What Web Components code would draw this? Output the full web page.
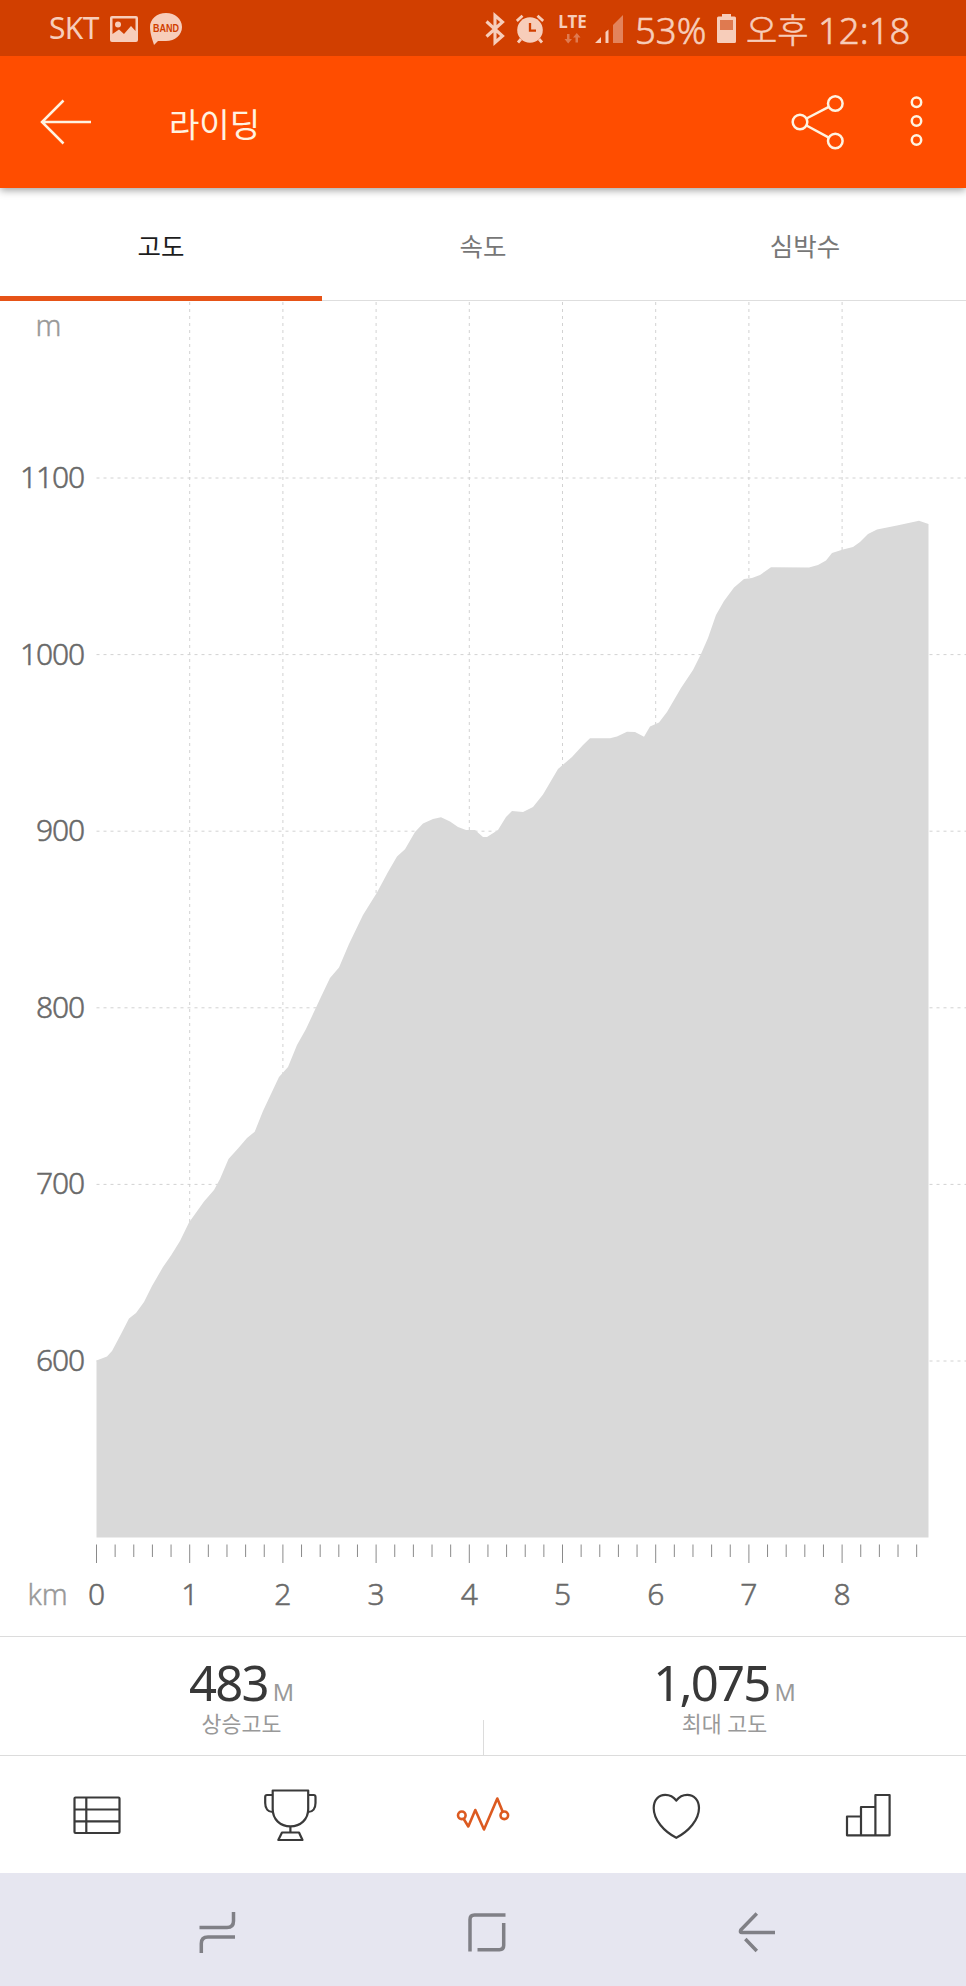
<!DOCTYPE html>
<html lang="ko">
<head>
<meta charset="utf-8">
<meta name="viewport" content="width=device-width">
<title>라이딩</title>
<style>
    body {
        margin: 0;
        background: #fff;
        font-family: "Noto Sans", "Noto Sans CJK KR", sans-serif;
    }
</style>
</head>
<body>
<ride-screen>
    <status-bar slot="top"></status-bar>
    <app-bar slot="top">라이딩</app-bar>
    <tab-strip slot="top">
        <tab-item selected>고도</tab-item>
        <tab-item>속도</tab-item>
        <tab-item>심박수</tab-item>
    </tab-strip>
    <elevation-chart></elevation-chart>
    <stat-row slot="bottom">
        <stat-cell value="483" unit="M">상승고도</stat-cell>
        <stat-cell value="1,075" unit="M">최대 고도</stat-cell>
    </stat-row>
    <icon-nav slot="bottom"></icon-nav>
    <system-nav slot="bottom"></system-nav>
</ride-screen>

<script>
class WcBase extends HTMLElement {
    constructor() {
        super();
        this.attachShadow({ mode: "open" });
    }

    connectedCallback() {
        this.shadowRoot.innerHTML = this.render();
    }
}

class RideScreen extends WcBase {
    render() {
        return `
            <style>
                :host {
                    display: flex;
                    flex-flow: column nowrap;
                    width: 966px;
                    height: 1986px;
                    overflow: hidden;
                }
                main {
                    flex: 1;
                    min-height: 0;
                }
            </style>
            <slot name="top"></slot>
            <main><slot></slot></main>
            <slot name="bottom"></slot>
        `;
    }
}

class StatusBar extends WcBase {
    render() {
        return `
            <style>
                :host {
                    display: flex;
                    justify-content: space-between;
                    flex: none;
                    height: 56px;
                    box-sizing: border-box;
                    padding: 0 48px 0 49px;
                    background: #d13f00;
                    color: #f7cdba;
                    fill: #f7cdba;
                    line-height: 56px;
                    white-space: nowrap;
                }
                div {
                    display: flex;
                }
                svg {
                    display: block;
                    flex: none;
                    height: 56px;
                }
                span {
                    flex: none;
                }
                .carrier {
                    width: 61px;
                    font-size: 30px;
                    letter-spacing: -0.6px;
                }
                .big {
                    font-size: 36.5px;
                    font-weight: 300;
                    -webkit-text-stroke: 0.6px;
                    margin-top: 2px;
                }
                .right {
                    width: 433px;
                }
                .network {
                    width: 31px;
                    margin: 0 7px 0 13px;
                    display: flex;
                    flex-flow: column;
                    align-items: center;
                    font-size: 17px;
                    font-weight: 700;
                    line-height: 20px;
                    padding-top: 12px;
                }
                .network svg {
                    height: 12px;
                    margin-top: 1px;
                }
            </style>
            <div>
                <span class="carrier">SKT</span>
                <svg width="28" viewBox="0 0 28 56">
                    <path fill-rule="evenodd" d="M2 16H26Q28 16 28 18V40Q28 42 26 42H2Q0 42 0 40V18Q0 16 2 16ZM2.5 18.5V34L9 29.500L14 34L21 26L25.500 31V18.500Z"/>
                    <circle cx="8" cy="24.500" r="3"/>
                </svg>
                <svg width="32" viewBox="0 0 32 56" style="margin-left:12px">
                    <path d="M16 13C25 13 32 19 32 27S25 41 16 41H8L4 45C3 41 0 34 0 27C0 19 7 13 16 13Z"/>
                    <text x="16" y="31.500" text-anchor="middle" textLength="26" lengthAdjust="spacingAndGlyphs" font-family="Liberation Sans" font-size="10" font-weight="700" fill="#d13f00">BAND</text>
                </svg>
            </div>
            <div class="right">
                <svg width="20" viewBox="0 0 20 56">
                    <path d="M1.500 21.500L17.500 36L10 42.500V15.500L17.500 22L1.500 36.500" fill="none" stroke="#f7cdba" stroke-width="3.100"/>
                </svg>
                <svg width="28" viewBox="0 0 28 56" style="margin-left:11px">
                    <circle cx="14" cy="30" r="12.800"/>
                    <path d="M0.800 21L6.500 15.800M27.200 21L21.500 15.800M5 39L2 42.500M23 39L26 42.500" stroke="#f7cdba" stroke-width="2.800"/>
                    <path d="M14 23V30.700H20" fill="none" stroke="#d13f00" stroke-width="2.300"/>
                </svg>
                <span class="network">LTE
                    <svg width="17" viewBox="0 0 17 12" fill="#df7a50">
                        <path d="M3 1H5.500V6H8L4.200 10.500L.5 6H3ZM11.500 9.500H14V4.500H16.500L12.800 0L9 4.500H11.500Z"/>
                    </svg>
                </span>
                <svg width="28" viewBox="0 0 28 56">
                    <path d="M0 43L6 37V43ZM10.500 32L13.500 29.500V43H10.500Z"/>
                    <path d="M18 25L28 15V43H18Z" fill="#e3835b"/>
                </svg>
                <span class="big" style="width:82px;margin-left:12px">53%</span>
                <svg width="19" viewBox="0 0 19 56">
                    <path d="M5 14H14V16.500H17.500Q19 16.500 19 18V41.500Q19 43 17.500 43H1.500Q0 43 0 41.500V18Q0 16.500 1.500 16.500H5Z"/>
                    <path d="M3 20H16V30H3Z" fill="#df7a50"/>
                </svg>
                <span class="big" style="width:72px;margin-left:10px;font-size:34px">오후</span>
                <span class="big">12:18</span>
            </div>
        `;
    }
}

class AppBar extends WcBase {
    render() {
        return `
            <style>
                :host {
                    display: flex;
                    flex: none;
                    align-items: center;
                    position: relative;
                    z-index: 1;
                    height: 132px;
                    background: #ff4d00;
                    color: #fff3e0;
                    font-size: 33px;
                    box-shadow: 0 2px 8px rgba(0, 0, 0, .4);
                    /* keep the shadow off the status bar */
                    clip-path: inset(0 0 -14px);
                }
                svg {
                    display: block;
                    fill: none;
                    stroke: #fff3e0;
                    stroke-width: 2.5;
                }
                .back {
                    margin: 0 77px 0 40px;
                }
                h1 {
                    flex: 1;
                    margin: 1px 0 0;
                    font-size: inherit;
                    font-weight: 400;
                }
                .share {
                    margin-right: 63px;
                }
                .more {
                    margin-right: 42px;
                }
            </style>
            <svg class="back" width="52" height="52" viewBox="0 0 52 52">
                <path d="M51 26H2M23.500 4.500L2 26L23.500 47.500"/>
            </svg>
            <h1><slot></slot></h1>
            <svg class="share" width="54" height="60" viewBox="0 0 54 60">
                <circle cx="9" cy="30" r="7.300"/>
                <circle cx="44.300" cy="11.500" r="7.300"/>
                <circle cx="44.300" cy="49" r="7.300"/>
                <path d="M15.500 26.500L37.800 14.800M15.500 33.500L37.800 45.600"/>
            </svg>
            <svg class="more" width="16" height="60" viewBox="0 0 16 60">
                <circle cx="8.500" cy="10.300" r="4.700"/>
                <circle cx="8.500" cy="29" r="4.700"/>
                <circle cx="8.500" cy="48" r="4.700"/>
            </svg>
        `;
    }
}

class TabStrip extends WcBase {
    render() {
        return `
            <style>
                :host {
                    display: grid;
                    flex: none;
                    grid-template-columns: repeat(3, 1fr);
                    height: 113px;
                    background: linear-gradient(#dedede, #dedede) bottom / 100% 1px no-repeat;
                }
            </style>
            <slot></slot>
        `;
    }
}

class TabItem extends WcBase {
    render() {
        return `
            <style>
                :host {
                    display: flex;
                    align-items: center;
                    justify-content: center;
                    box-sizing: border-box;
                    border-bottom: 5px solid transparent;
                    padding-top: 5px;
                    color: #777;
                    font-size: 25.500px;
                }
                :host([selected]) {
                    color: #1d1d1d;
                    border-color: #e65317;
                }
            </style>
            <slot></slot>
        `;
    }
}

class ElevationChart extends WcBase {
    // kilometre 0 and the 1100 m line, in chart pixels
    #originX = 96.5;
    #originY = 177;
    #perKm = 93.2;
    #per100m = 176.6;
    #bottom = 1236.5;

    #profile = [
        [96.500, 1059.500], [107, 1055.500], [112, 1050], [120, 1035], [129, 1017.500], [136, 1012], [144, 1001], [152, 985], [163, 966],
        [171, 954.500], [180, 940], [189, 921.500], [204, 900.500], [214, 889], [220, 878], [228.500, 858], [238, 847.500], [247, 837],
        [254.700, 830.700], [263, 810], [279, 776], [288, 766], [297, 744], [306, 728], [320, 698], [330, 677], [339, 666.500],
        [349, 643], [363, 614], [377, 591.500], [388, 571], [397, 555.500], [405, 548.300], [415, 531], [423, 522.500],
        [433, 518], [441, 516.300], [450, 520.500], [458, 526], [466, 529], [475, 529], [483, 536], [487, 536], [498, 529],
        [506, 516], [512, 510], [523, 511], [533, 506], [543, 493.500], [558, 468], [572, 456], [583, 444], [590, 437.300],
        [610, 437.300], [617, 435.500], [627, 430.700], [635, 431], [644, 435.700], [650, 425.500], [659, 421.500], [667, 411],
        [681, 387], [693, 369], [701, 353], [708, 337], [716, 314], [724, 300], [734, 286.500], [744, 278], [752, 277],
        [760, 274], [771, 266.300], [809, 266.500], [818, 264], [826, 259.500], [832, 252], [843, 248.500], [853, 246],
        [860, 241], [868, 233], [877, 228.500], [897, 224.500], [919, 219.700], [928.500, 223]
    ];

    #grid() {
        let lines = "";
        for (let km = 1; km <= 8; km++) {
            const x = this.#originX + km * this.#perKm;
            lines += `<path d="M${x} 1V${this.#bottom}"/>`;
        }
        for (let i = 0; i < 6; i++) {
            const y = this.#originY + i * this.#per100m;
            lines += `<path d="M${this.#originX} ${y}H966"/>`;
        }
        return lines;
    }

    #ticks() {
        let ticks = "";
        for (let i = 0; i <= 44; i++) {
            const x = this.#originX + i * this.#perKm / 5;
            ticks += `<path d="M${x} 1243.500V${i % 5 === 0 ? 1262 : 1256}"/>`;
        }
        return ticks;
    }

    #labels() {
        let labels = "";
        for (let i = 0; i < 6; i++) {
            const y = this.#originY + i * this.#per100m + 10;
            labels += `<text class="altitude" x="84" y="${y}" text-anchor="end">${1100 - i * 100}</text>`;
        }
        for (let km = 0; km <= 8; km++) {
            labels += `<text x="${this.#originX + km * this.#perKm}" y="1304" text-anchor="middle">${km}</text>`;
        }
        return labels;
    }

    render() {
        const points = this.#profile.map(p => p.join(" ")).join("L");
        return `
            <style>
                :host {
                    display: block;
                }
                svg {
                    display: block;
                }
                .grid {
                    stroke: #d2d2d2;
                    stroke-dasharray: 3 4;
                }
                .ticks {
                    stroke: #8a8a8a;
                }
                /* light weight with a hairline stroke, between 300 and 400 */
                .labels {
                    fill: #696969;
                    stroke: #696969;
                    stroke-width: 0.5;
                    font-size: 30px;
                    font-weight: 300;
                }
                .altitude {
                    letter-spacing: -1.1px;
                }
                .unit {
                    fill: #999;
                    stroke: #999;
                    stroke-width: 0.4;
                    font-size: 29px;
                    font-weight: 300;
                }
            </style>
            <svg width="966" height="1335" viewBox="0 0 966 1335">
                <g class="grid">${this.#grid()}</g>
                <path fill="#d9d9d9" d="M96.500 ${this.#bottom}L${points}V${this.#bottom}Z"/>
                <g class="ticks">${this.#ticks()}</g>
                <g class="labels">${this.#labels()}</g>
                <text class="unit" x="35.500" y="35">m</text>
                <text class="unit" x="27.500" y="1304">km</text>
            </svg>
        `;
    }
}

class StatRow extends WcBase {
    render() {
        return `
            <style>
                :host {
                    display: grid;
                    flex: none;
                    grid-template-columns: 1fr 1fr;
                    box-sizing: border-box;
                    height: 120px;
                    border: solid #dcdcdc;
                    border-width: 1px 0;
                    background: linear-gradient(#dcdcdc, #dcdcdc) center bottom / 1px 35px no-repeat;
                }
            </style>
            <slot></slot>
        `;
    }
}

class StatCell extends WcBase {
    render() {
        return `
            <style>
                :host {
                    display: flex;
                    flex-flow: column nowrap;
                    align-items: center;
                    padding-top: 17px;
                    color: #999;
                }
                p {
                    margin: 0;
                    line-height: 56px;
                    font-size: 23.5px;
                }
                b {
                    font-size: 49px;
                    font-weight: 400;
                    letter-spacing: -1.8px;
                    color: #383838;
                    margin-right: 5px;
                }
                small {
                    margin-top: -10px;
                    font-size: 21.700px;
                    line-height: 28px;
                }
            </style>
            <p><b>${this.getAttribute("value")}</b>${this.getAttribute("unit")}</p>
            <small><slot></slot></small>
        `;
    }
}

class IconNav extends WcBase {
    render() {
        return `
            <style>
                :host {
                    display: grid;
                    flex: none;
                    grid-template-columns: repeat(5, 1fr);
                    place-items: center;
                    height: 117px;
                }
                svg {
                    width: 60px;
                    height: 60px;
                    fill: none;
                    stroke: #3a3a3a;
                    stroke-width: 2.2;
                    stroke-linejoin: round;
                }
                .active {
                    stroke: #dc5a20;
                    stroke-width: 2.6;
                }
            </style>
            <svg viewBox="0 0 60 60">
                <rect x="7.500" y="12.500" width="45" height="35.500" rx="1"/>
                <path d="M7.500 24.500H52.500M7.500 36.300H52.500M19.300 12.500V48"/>
            </svg>
            <svg viewBox="0 0 60 60">
                <path d="M12.700 5.500H48.200V24C48.200 34.500 40.500 41.300 30.400 41.300S12.700 34.500 12.700 24Z"/>
                <path d="M12.700 10H7Q5.200 10 5.200 12V18C5.200 23.500 8 27 12.700 27M48.200 10H53.700Q55.500 10 55.500 12V18C55.500 23.500 52.700 27 48.200 27M30.400 41.300V47.500M22 47.500H39L42.500 55H18.300Z"/>
            </svg>
            <svg class="active" viewBox="0 0 60 60">
                <circle cx="8.800" cy="30.300" r="3.800"/>
                <circle cx="51.300" cy="30.300" r="3.800"/>
                <path d="M10.600 33.800L15.300 41.500L22.300 25L31 44.500L44.300 13.500L49.800 27"/>
            </svg>
            <svg viewBox="0 0 60 60">
                <path d="M30.300 15.500C27.300 11.500 23.300 9.800 19.300 9.800C12.500 9.800 7.700 15 7.700 23C7.700 35 18 46.500 30.300 52.800C42.500 46.500 53 35 53 23C53 15 48 9.800 41.200 9.800C37.300 9.800 33.300 11.500 30.300 15.500Z"/>
            </svg>
            <svg viewBox="0 0 60 60">
                <path d="M8 50.300V31.500H22V22H36.400V10H50.600V50.300ZM22 31.500V50.300M36.400 22V50.300"/>
            </svg>
        `;
    }
}

class SystemNav extends WcBase {
    render() {
        return `
            <style>
                :host {
                    display: grid;
                    flex: none;
                    grid-template-columns: repeat(3, 270px);
                    place-items: center;
                    box-sizing: border-box;
                    height: 113px;
                    padding: 4px 0 0 82px;
                    background: #e6e6f0;
                }
                svg {
                    width: 44px;
                    height: 44px;
                    fill: none;
                    stroke: #808086;
                    stroke-width: 3.5;
                }
            </style>
            <svg viewBox="0 0 44 44">
                <path d="M4.500 17.500H32Q38.500 17.500 38.500 11V2M40 27H13Q6.300 27 6.300 33.500V43"/>
            </svg>
            <svg viewBox="0 0 44 44">
                <path d="M5 41.500V9.500Q5 5 9.500 5H40.500M38.700 13V35.500Q38.700 39.700 34.500 39.700H12.500"/>
            </svg>
            <svg viewBox="0 0 44 44" stroke-linejoin="round">
                <path d="M21.800 3.500L6 19.700Q4.500 22.500 7 22.500H40M10.300 29L21.800 41"/>
            </svg>
        `;
    }
}

customElements.define("ride-screen", RideScreen);
customElements.define("status-bar", StatusBar);
customElements.define("app-bar", AppBar);
customElements.define("tab-strip", TabStrip);
customElements.define("tab-item", TabItem);
customElements.define("elevation-chart", ElevationChart);
customElements.define("stat-row", StatRow);
customElements.define("stat-cell", StatCell);
customElements.define("icon-nav", IconNav);
customElements.define("system-nav", SystemNav);
</script>
</body>
</html>
